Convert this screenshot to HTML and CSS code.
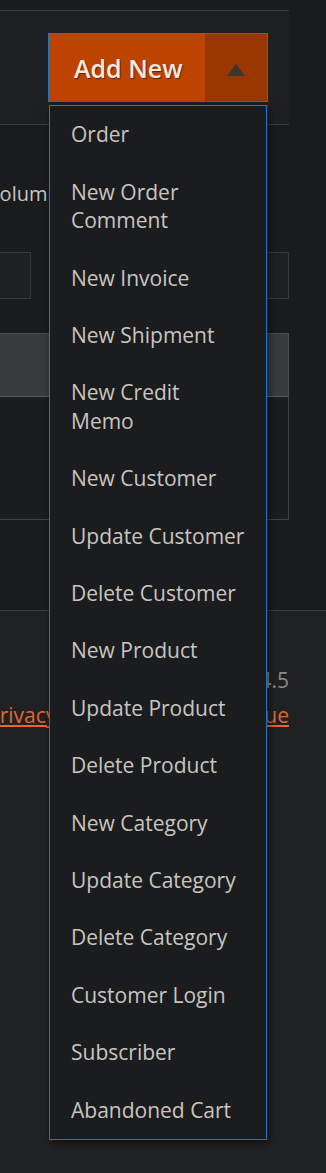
FILE: index.html
```html
<!DOCTYPE html>
<html lang="en">
<head>
    <meta charset="UTF-8">
    <meta name="viewport" content="width=device-width, initial-scale=1.0">
    <title>Webhooks</title>
    <link rel="stylesheet" href="styles.css">
</head>
<body>
    <div class="page">
        <div class="content">
            <div class="toolbar">
                <div class="add-new">
                    <button type="button" class="add-button">
                        <span class="add-label">Add New</span>
                        <span class="add-toggle">
                            <svg width="18" height="12" viewBox="0 0 18 12"><path d="M9 0 L18 12 L0 12 Z" fill="#3a3634"/></svg>
                        </span>
                    </button>
                    <ul class="add-menu">
                        <li>Order</li>
                        <li>New Order<br>Comment</li>
                        <li>New Invoice</li>
                        <li>New Shipment</li>
                        <li>New Credit<br>Memo</li>
                        <li>New Customer</li>
                        <li>Update Customer</li>
                        <li>Delete Customer</li>
                        <li>New Product</li>
                        <li>Update Product</li>
                        <li>Delete Product</li>
                        <li>New Category</li>
                        <li>Update Category</li>
                        <li>Delete Category</li>
                        <li>Customer Login</li>
                        <li>Subscriber</li>
                        <li>Abandoned Cart</li>
                    </ul>
                </div>
            </div>
            <div class="grid-tools">
                <div class="columns-label">Columns</div>
                <div class="pager">
                    <div class="pager-box pager-prev"></div>
                    <div class="pager-box pager-next"></div>
                </div>
            </div>
            <div class="grid-table">
                <div class="grid-head"></div>
                <div class="grid-body"></div>
            </div>
        </div>
        <footer class="footer">
            <div class="version">Magento ver. 2.4.5</div>
            <div class="footer-links">
                <a href="#" class="privacy-link">Privacy Policy</a>
                <a href="#" class="issue-link">Report an Issue</a>
            </div>
        </footer>
    </div>
</body>
</html>
```

FILE: styles.css
```css
body {
    margin: 0;
    background-color: #1a1b1d;
    font-family: "Open Sans", "Noto Sans", sans-serif;
    color: #c9c5c0;
    overflow: hidden;
}
.page {
    display: flex;
    flex-direction: column;
    min-height: 1173px;
}
.content {
    width: 289px;
    padding-top: 10px;
    height: 600px;
}
.toolbar {
    height: 115px;
    padding: 22px 0 0 48px;
    box-sizing: border-box;
    border-top: 1px solid #3a3c3e;
    border-bottom: 1px solid #3a3c3e;
    background-color: #1e1f21;
}
.add-new {
    position: relative;
    width: 220px;
}
.add-button {
    display: flex;
    width: 220px;
    height: 69px;
    padding: 0;
    border: 1px solid #1979c3;
    background-color: #bd4400;
    font-family: inherit;
    cursor: pointer;
}
.add-label {
    flex: 1;
    align-self: center;
    text-align: left;
    padding-left: 25px;
    font-size: 25px;
    font-weight: 600;
    color: #f5e9df;
    text-shadow: 1px 1px 1px #5e2200;
}
.add-toggle {
    width: 62px;
    height: 100%;
    display: flex;
    align-items: center;
    justify-content: center;
    background-color: #9a3700;
}
.add-toggle svg {
    margin-top: 4px;
}
.add-menu {
    position: absolute;
    top: 72px;
    left: 1px;
    width: 218px;
    box-sizing: border-box;
    margin: 0;
    padding: 0;
    list-style: none;
    border: 1px solid #1979c3;
    background-color: #1b1c1e;
    box-shadow: 2px 3px 8px rgba(0, 0, 0, 0.5);
    z-index: 5;
}
.add-menu li {
    padding: 14.3px 10px 14.6px 21px;
    font-size: 21px;
    line-height: 28.5px;
    color: #c9c5c0;
}
.grid-tools {
    padding-top: 55px;
}
.columns-label {
    margin-left: -13px;
    font-size: 20px;
    line-height: 28px;
    color: #c9c5c0;
    white-space: nowrap;
}
.pager {
    display: flex;
    justify-content: space-between;
    margin-top: 44px;
}
.pager-box {
    height: 47px;
    box-sizing: border-box;
    border: 1px solid #36383a;
    background-color: #1f2022;
}
.pager-prev {
    width: 32px;
    margin-left: -1px;
}
.pager-next {
    width: 60px;
}
.grid-table {
    margin-top: 34px;
}
.grid-head {
    height: 64px;
    box-sizing: border-box;
    border: 1px solid #4a4d50;
    border-left: none;
    border-bottom-color: #5a5d61;
    background-color: #383b3e;
}
.grid-body {
    height: 123px;
    box-sizing: border-box;
    border-right: 1px solid #404244;
    border-bottom: 1px solid #404244;
    background-color: #1b1c1e;
}
.footer {
    flex: 1;
    border-top: 1px solid #3a3c3e;
    background-color: #202123;
    padding: 55px 37px 0 0;
    font-size: 21px;
    line-height: 28.5px;
}
.version {
    text-align: right;
    color: #8a8a8a;
}
.footer-links {
    display: flex;
    justify-content: space-between;
    margin-top: 6px;
}
.footer-links a {
    color: #e5662e;
    text-decoration: underline;
    white-space: nowrap;
}
.privacy-link {
    display: block;
    max-width: 120px;
    overflow: hidden;
    margin-left: -13px;
}
```
